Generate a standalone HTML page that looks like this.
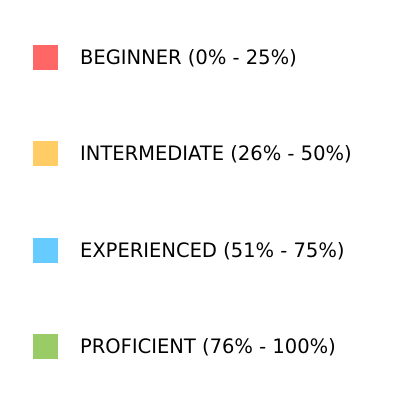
<!DOCTYPE html>
<html><head><style>
body{margin:0;width:407px;height:405px;background:#fff;position:relative;font-family:"DejaVu Sans",sans-serif;}
.s{position:absolute;left:33px;width:25px;height:25px;}
.t{position:absolute;left:80px;font-size:19.5px;line-height:25px;color:#000;white-space:nowrap;}
</style></head><body>
<div class="s" style="top:45px;background:#ff6666"></div><div class="t" style="top:45px">BEGINNER (0% - 25%)</div>
<div class="s" style="top:141px;background:#ffcc66"></div><div class="t" style="top:141px">INTERMEDIATE (26% - 50%)</div>
<div class="s" style="top:238px;background:#66ccff"></div><div class="t" style="top:238px">EXPERIENCED (51% - 75%)</div>
<div class="s" style="top:334px;background:#99cc66"></div><div class="t" style="top:334px">PROFICIENT (76% - 100%)</div>
</body></html>
